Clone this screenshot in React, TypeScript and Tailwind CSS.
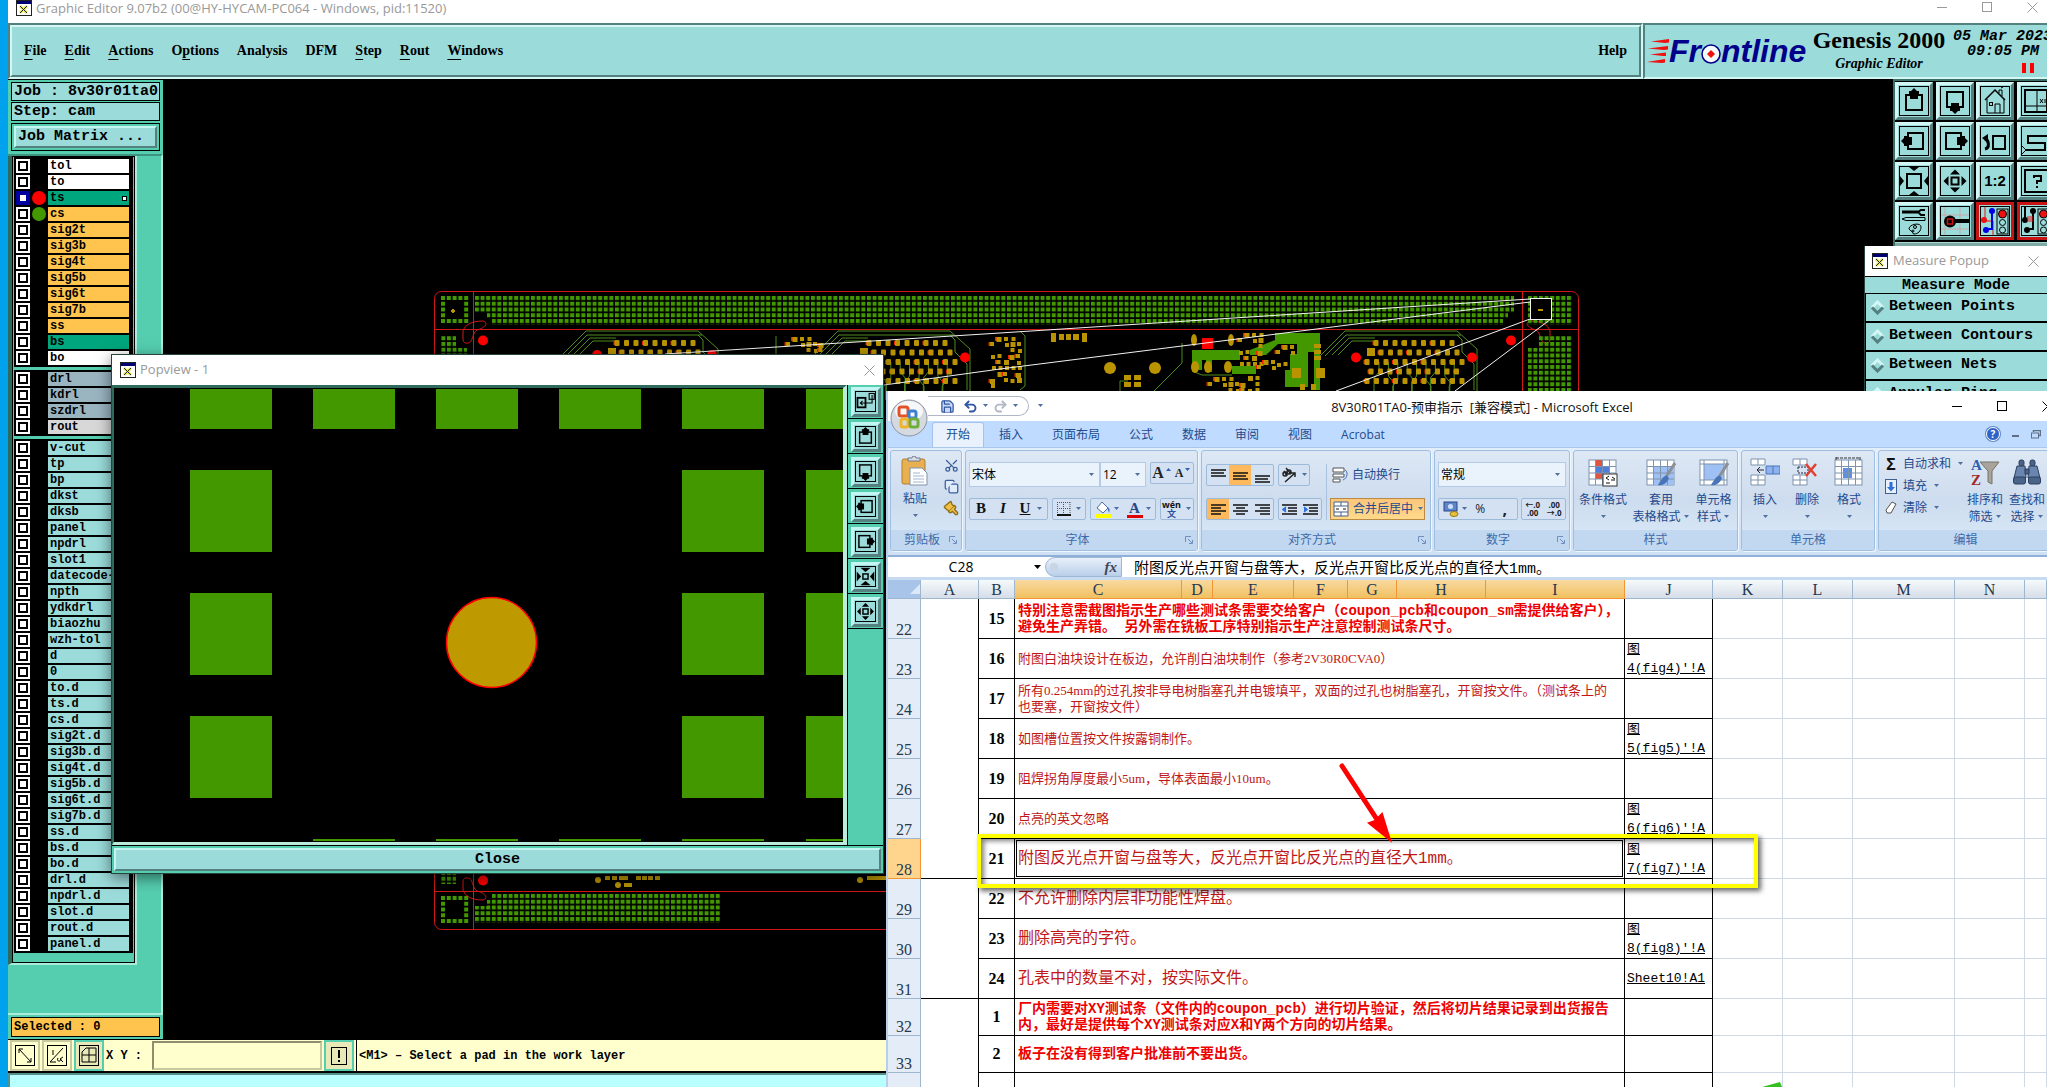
import type { ReactNode } from "react";
import { Copy, Paintbrush, Redo2, Save, Scissors, Undo2 } from "lucide-react";

/* ---------- shared bits ---------- */

function AppIcon() {
  return (
    <svg width="16" height="16" viewBox="0 0 16 16" className="shrink-0">
      <rect x="0.5" y="0.5" width="15" height="15" fill="#fff" stroke="#222" />
      <rect x="1" y="1" width="14" height="3" fill="#000070" />
      <path d="M4 6l7 7M11 6l-7 7" stroke="#e8e860" strokeWidth="3" />
      <path d="M4 6l7 7M11 6l-7 7" stroke="#222" strokeWidth="1" />
    </svg>
  );
}

function MinGlyph() {
  return (
    <svg width="11" height="11" viewBox="0 0 11 11" stroke="currentColor">
      <path d="M0 5.5h10" />
    </svg>
  );
}

function MaxGlyph() {
  return (
    <svg width="11" height="11" viewBox="0 0 11 11" fill="none" stroke="currentColor">
      <rect x="0.5" y="0.5" width="9" height="9" />
    </svg>
  );
}

function CloseGlyph() {
  return (
    <svg width="11" height="11" viewBox="0 0 11 11" stroke="currentColor">
      <path d="M0.5 0.5l10 10M10.5 0.5l-10 10" />
    </svg>
  );
}

function WindowButtons({ className }: { className: string }) {
  return (
    <div className={`flex shrink-0 overflow-hidden ${className}`}>
      <button aria-label="Minimize" className="flex w-[45px] shrink-0 items-center justify-center"><MinGlyph /></button>
      <button aria-label="Maximize" className="flex w-[45px] shrink-0 items-center justify-center"><MaxGlyph /></button>
      <button aria-label="Close window" className="flex w-[45px] shrink-0 items-center justify-center"><CloseGlyph /></button>
    </div>
  );
}

/* ---------- layer list ---------- */

interface Layer {
  name: string;
  color: string;
  dot?: string;
  active?: boolean;
}

const WHITE = "bg-white";
const GREEN = "bg-[#00a67d]";
const ORANGE = "bg-[#fec44d]";
const CYAN = "bg-[#9bdbda]";
const STEEL = "bg-[#9ab4c0]";

const boardLayers: Layer[] = [
  { name: "tol", color: WHITE },
  { name: "to", color: WHITE },
  { name: "ts", color: GREEN, dot: "bg-[#ff0000]", active: true },
  { name: "cs", color: ORANGE, dot: "bg-[#439800]" },
  { name: "sig2t", color: ORANGE },
  { name: "sig3b", color: ORANGE },
  { name: "sig4t", color: ORANGE },
  { name: "sig5b", color: ORANGE },
  { name: "sig6t", color: ORANGE },
  { name: "sig7b", color: ORANGE },
  { name: "ss", color: ORANGE },
  { name: "bs", color: GREEN },
  { name: "bo", color: WHITE },
];

const drillLayers: Layer[] = [
  { name: "drl", color: STEEL },
  { name: "kdrl", color: STEEL },
  { name: "szdrl", color: STEEL },
  { name: "rout", color: "bg-[#d8d8d8]" },
];

const miscLayers: Layer[] = [
  "v-cut", "tp", "bp", "dkst", "dksb", "panel", "npdrl", "slot1", "datecode-", "npth", "ydkdrl",
  "biaozhu", "wzh-tol", "d", "0", "to.d", "ts.d", "cs.d", "sig2t.d", "sig3b.d", "sig4t.d",
  "sig5b.d", "sig6t.d", "sig7b.d", "ss.d", "bs.d", "bo.d", "drl.d", "npdrl.d", "slot.d",
  "rout.d", "panel.d",
].map((name) => ({ name, color: CYAN }));

function LayerRow({ layer }: { layer: Layer }) {
  return (
    <label className="flex h-3.5 shrink-0 items-center gap-0.5">
      <input
        type="checkbox"
        className={`size-3.5 appearance-none border-2 bg-white ${
          layer.active
            ? "border-[#0000a0] shadow-[inset_0_0_0_2px_#0000a0]"
            : "border-white shadow-[inset_0_0_0_2px_#000]"
        }`}
      />
      <span className={`size-3.5 rounded-full ${layer.dot ?? ""}`} />
      <span className={`flex h-3.5 w-[81px] items-center justify-between px-0.5 text-xs leading-3 font-bold ${layer.color}`}>
        {layer.name}
        {layer.active && <span className="size-[5px] border border-black bg-white" />}
      </span>
    </label>
  );
}

function LayerGroup({ layers }: { layers: Layer[] }) {
  return (
    <div className="flex flex-col gap-0.5 bg-black p-0.5">
      {layers.map((layer) => (
        <LayerRow key={layer.name} layer={layer} />
      ))}
    </div>
  );
}

function LeftPanel() {
  return (
    <aside className="flex w-[155px] shrink-0 flex-col border-t border-black bg-[#55ceb0] text-[15px] font-bold">
      <div className="flex flex-col gap-px p-[3px] pt-0.5 leading-[18px]">
        <div className="h-[19px] border border-black bg-[#9bdbda] pl-0.5 whitespace-pre">Job : 8v30r01ta0</div>
        <div className="h-[19px] border border-black bg-[#9bdbda] pl-0.5 whitespace-pre">Step: cam</div>
        <div className="mt-px h-7 border border-black p-0.5">
          <button className="h-[22px] w-full border-2 border-t-[#c3f5f2] border-r-[#548080] border-b-[#548080] border-l-[#c3f5f2] bg-[#9bdbda] pl-0.5 text-left leading-4">
            Job Matrix ...
          </button>
        </div>
      </div>
      <div className="flex min-h-0 flex-1 border-t-2 border-r-2 border-t-[#3c9480] border-r-[#a9ecd9]">
        <div className="w-[129px] self-start border-r-2 border-b-2 border-l-4 border-r-[#a9ecd9] border-b-[#a9ecd9] border-l-[#2f6b5d]">
          <div className="border border-black px-px pb-[9px]">
            <div className="flex flex-col gap-[3px]">
              <LayerGroup layers={boardLayers} />
              <LayerGroup layers={drillLayers} />
              <LayerGroup layers={miscLayers} />
            </div>
          </div>
        </div>
      </div>
      <div className="border-t-2 border-t-[#a9ecd9] px-[3px] pt-0.5 pb-0.5">
        <div className="h-5 border border-black bg-[#fec44d] pl-0.5 text-xs leading-[18px] font-bold">Selected : 0</div>
      </div>
    </aside>
  );
}

/* ---------- header ---------- */

const menus: [string, string, string][] = [
  ["", "F", "ile"],
  ["", "E", "dit"],
  ["", "A", "ctions"],
  ["O", "p", "tions"],
  ["Analysis", "", ""],
  ["DFM", "", ""],
  ["", "S", "tep"],
  ["", "R", "out"],
  ["", "W", "indows"],
];

function Header() {
  return (
    <header className="flex h-14 shrink-0 font-['Liberation_Serif',serif] font-bold">
      <nav className="flex flex-1 items-center justify-between border-2 border-t-[#548080] border-r-[#d2f7f5] border-b-[#d2f7f5] border-l-[#548080] bg-[#9bdbda]">
        <div className="flex h-full w-full items-center justify-between border-2 border-t-[#d2f7f5] border-r-[#548080] border-b-[#548080] border-l-[#d2f7f5] pr-3 pl-3 text-sm">
          <div className="flex gap-[18px]">
            {menus.map(([pre, key, post]) => (
              <button key={pre + key + post}>
                {pre}
                <span className="underline underline-offset-4">{key}</span>
                {post}
              </button>
            ))}
          </div>
          <button>Help</button>
        </div>
      </nav>
      <div className="flex w-[404px] shrink-0 overflow-hidden border-t-2 border-b-2 border-l-2 border-t-[#548080] border-b-[#d2f7f5] border-l-[#548080] bg-[#9bdbda]">
        <div className="flex w-[164px] shrink-0 items-center pl-0.5">
          <svg width="22" height="26" viewBox="0 0 22 26" fill="#f01010" className="shrink-0">
            <path d="M4 3.5L22 1v3.500L18 5zM1 10.500L21 8v3.500L17 12zM3 16.500L19 14.500v3.500L16 18zM0 24L18 21v3.500L15 25z" />
          </svg>
          <div className="flex items-center font-['Liberation_Sans',sans-serif] text-[32px] leading-8 font-bold text-[#00008b] italic">
            Fr
            <svg width="20" height="20" viewBox="0 0 20 20" className="mt-1.5 shrink-0">
              <circle cx="10" cy="10" r="9" fill="#f4fbfb" stroke="#00008b" strokeWidth="1.500" />
              <path d="M10 6l4 4-4 4-4-4z" fill="#f01010" />
            </svg>
            ntline
          </div>
        </div>
        <div className="flex w-[140px] shrink-0 flex-col items-center pt-px">
          <span className="text-2xl leading-7">Genesis 2000</span>
          <span className="mt-0.5 text-sm leading-4 italic">Graphic Editor</span>
        </div>
        <div className="flex shrink-0 flex-col pt-1 pl-1 font-['Liberation_Mono',monospace] text-[15px] leading-[15px] font-bold italic">
          <span className="whitespace-pre">05 Mar 2023</span>
          <span className="pl-3.5">09:05 PM</span>
          <span className="mt-1 ml-[69px] flex gap-1">
            <span className="h-2.5 w-1 bg-[#ff0000]" />
            <span className="h-2.5 w-1 bg-[#ff0000]" />
          </span>
        </div>
      </div>
    </header>
  );
}

/* ---------- tool buttons ---------- */

const boxWithArrow = (
  <>
    <rect x="7" y="9" width="16" height="15" fill="none" stroke="#000" strokeWidth="2" />
    <path d="M15 2l3 3h2v3h-1v5h-8v-5h-1v-3h2z" fill="#000" />
  </>
);

const toolIcons: Record<string, ReactNode> = {
  up: <g>{boxWithArrow}</g>,
  down: <g transform="rotate(180 15 15)">{boxWithArrow}</g>,
  left: <g transform="rotate(-90 15 15)">{boxWithArrow}</g>,
  right: <g transform="rotate(90 15 15)">{boxWithArrow}</g>,
  home: (
    <g fill="none" stroke="#000">
      <path d="M5 14L15 4l10 10" strokeWidth="1.500" />
      <path d="M7 13v14h17V13M19 7V4h3v6M15 27v-9h5v9M21 2l2-1" />
      <rect x="9.500" y="16.500" width="3" height="3" />
    </g>
  ),
  xy: (
    <g fill="none" stroke="#000">
      <rect x="4" y="4" width="22" height="22" strokeWidth="2" />
      <path d="M16 4v22M4 20h22M19 13l3 4M22 13l-3 4M24 13v4" />
    </g>
  ),
  back: (
    <g fill="none" stroke="#000" strokeWidth="2">
      <rect x="13" y="10" width="12" height="13" />
      <path d="M5 23c5-1 4-9 0-10" strokeWidth="3" />
      <path d="M8 8v9l-6-5z" fill="#000" stroke="none" />
    </g>
  ),
  snake: (
    <g fill="none" stroke="#000">
      <path d="M28 10H7v7h17v7H5" strokeWidth="2" />
      <path d="M28 10l3-4M5 24l-4-4M5 24l-4 4" />
    </g>
  ),
  shrink: (
    <g>
      <rect x="8" y="8" width="14" height="14" fill="none" stroke="#000" strokeWidth="2" />
      <path d="M10 1h10l-5 4zM10 29h10l-5-4zM1 10v10l4-5zM29 10v10l-4-5z" />
    </g>
  ),
  converge: (
    <g>
      <rect x="11.500" y="11.500" width="7" height="7" fill="none" stroke="#000" strokeWidth="2" />
      <path d="M8 3h14l-7 6zM8 27h14l-7-6zM3 8v14l6-7zM27 8v14l-6-7z" />
    </g>
  ),
  grow: (
    <g>
      <rect x="11.500" y="11.500" width="7" height="7" fill="none" stroke="#000" strokeWidth="2" />
      <path d="M10 8.500h10l-5-5zM10 21.500h10l-5 5zM8.500 10v10l-5-5zM21.500 10v10l5-5z" />
    </g>
  ),
  help: (
    <g fill="none" stroke="#000" strokeWidth="2">
      <rect x="4" y="4" width="23" height="22" />
      <path d="M13 12v-2h7v5h-4v3M16 20v2" />
    </g>
  ),
  tools: (
    <g fill="none" stroke="#000">
      <path d="M3 6h16" strokeWidth="3" />
      <path d="M26 4h-4l-3 2 3 3h4" strokeWidth="2" />
      <path d="M3 13l4-1.500h19v3H7z" />
      <path d="M10 23c0-5 12-7 12-2 0 4-3 7-7 7-2 0-1-3-3-3z" />
      <circle cx="16" cy="21" r="1.500" />
      <circle cx="14" cy="25" r="1" />
    </g>
  ),
  pad: (
    <g>
      <path d="M5 1v28M20 1v28M1 9h28M1 23h28" stroke="#c9a8a8" />
      <path d="M12 15h17" stroke="#000" strokeWidth="4" />
      <circle cx="10" cy="15.500" r="6" />
      <rect x="7.500" y="13" width="5" height="5" fill="none" stroke="#d01010" strokeWidth="1.500" />
    </g>
  ),
  net: (
    <g>
      <path d="M5 1v14h8v14" stroke="#f01010" fill="none" />
      <path d="M12 5v18H6" stroke="#0000e0" fill="none" strokeWidth="2" />
      <circle cx="12" cy="5" r="3" fill="#0000e0" />
      <circle cx="6" cy="24" r="3" fill="#0000e0" />
      <circle cx="4" cy="14" r="3" fill="#f01010" />
      <rect x="17" y="3" width="11" height="25" fill="none" stroke="#000" />
      <circle cx="22.500" cy="8" r="4" fill="#f01010" stroke="#000" />
      <circle cx="22.500" cy="16.500" r="3" fill="none" stroke="#000" />
      <circle cx="22.500" cy="24" r="3" fill="none" stroke="#000" />
    </g>
  ),
  net2: (
    <g>
      <path d="M4 1v14M12 5v18H6" stroke="#000" fill="none" strokeWidth="2" />
      <circle cx="12" cy="5" r="3" />
      <circle cx="6" cy="24" r="3" />
      <circle cx="4" cy="14" r="3" />
      <path d="M7 10v6M9 10v6M11 10v6" stroke="#f01010" />
      <rect x="17" y="3" width="11" height="25" fill="none" stroke="#000" />
      <circle cx="22.500" cy="8" r="4" fill="#f01010" stroke="#000" />
      <circle cx="22.500" cy="16.500" r="3" fill="none" stroke="#000" />
      <circle cx="22.500" cy="24" r="3" fill="none" stroke="#000" />
    </g>
  ),
  popout: (
    <g fill="none" stroke="#000">
      <rect x="4" y="10" width="11" height="13" strokeWidth="2.500" />
      <rect x="20" y="4" width="7" height="8" strokeWidth="1.500" />
      <path d="M24 6v11H8M11 14l-3 3 3 3" strokeWidth="1.500" />
    </g>
  ),
};

const toolbar = [
  "up", "down", "home", "xy",
  "left", "right", "back", "snake",
  "shrink", "grow", "scale", "help",
  "tools", "pad", "net", "net2",
];

function ToolPalette() {
  return (
    <div className="w-[154px] shrink-0 self-start overflow-hidden border-t-2 border-l-2 border-[#3c6f66] bg-black">
      <div className="grid w-[160px] grid-cols-4 gap-0.5 pt-px">
        {toolbar.map((name) => (
          <button
            key={name}
            aria-label={name}
            className={`flex size-[38px] items-center justify-center border-[3px] bg-[#9bdbda] ${
              name.startsWith("net")
                ? "border-[#c81414]"
                : "border-t-[#d2f7f5] border-r-[#548080] border-b-[#548080] border-l-[#d2f7f5]"
            }`}
          >
            <span className="flex size-[30px] shrink-0 items-center justify-center border border-black">
              {name === "scale" ? (
                <span className="font-['Liberation_Sans',sans-serif] text-[15px] leading-4 font-bold">1:2</span>
              ) : (
                <svg width="28" height="28" viewBox="1 1 28 28">{toolIcons[name]}</svg>
              )}
            </span>
          </button>
        ))}
      </div>
      <div className="mt-0.5 h-1 border-t border-[#a9d9cf] bg-[#7fa9a3]" />
    </div>
  );
}

/* ---------- board drawing ---------- */

const PAD = "#439800";
const GOLD = "#b99400";

function range(from: number, count: number, step: number) {
  return Array.from({ length: count }, (_, i) => from + i * step);
}

// ring of small pads round a corner target
function PadRing({ x, y }: { x: number; y: number }) {
  const cells: [number, number][] = [];
  for (let r = 0; r < 5; r++) {
    for (let c = 0; c < 5; c++) {
      if (r === 0 || r === 4 || c === 0 || c === 4) cells.push([c, r]);
    }
  }
  return (
    <g fill={PAD}>
      {cells.map(([c, r]) => (
        <rect key={`${c}-${r}`} x={x + c * 5.8} y={y + r * 5.75} width="4" height="4" />
      ))}
    </g>
  );
}

function Connector({ x }: { x: number }) {
  const rows: [number, number, number][] = [
    [5, 343, 9],
    [10, 352.5, 9],
    [-4, 362, 11],
    [0, 371.5, 10],
    [-4, 381, 11],
  ];
  return (
    <g>
      <g fill="none" stroke="#4f8c1e">
        {range(0, 9, 1).map((i) => (
          <path key={i} d={`M${x + 8 + i * 9.4} 362v${10 + (i % 3) * 4}l${i % 2 ? 5 : -5} 6v14`} />
        ))}
        <path d={`M${x + 4} 341h-23l-14 14M${x + 4} 338h-26l-17 17M${x + 86} 335l5 5v12l12 12v26`} />
        <path d={`M${x + 90} 335h-115l-21 21M${x + 20} 331h-46l-25 25M${x + 20} 331h66l20 18v45`} />
      </g>
      <rect x={x - 4} y="348" width="8" height="8" fill={GOLD} />
      {rows.map(([dx, y, n]) =>
        range(x + dx, n, 9.5).map((px, i) => (
          <g key={`${px}-${y}`}>
            {i % 3 === 0 && <rect x={px - 3.5} y={y - 2} width="2" height="4" fill="#f02000" />}
            <rect x={px - 2.5} y={y - 3} width="5" height="6" rx="1" fill={GOLD} />
          </g>
        )),
      )}
    </g>
  );
}

function Cluster({ x, y, cols, rows }: { x: number; y: number; cols: number; rows: number }) {
  const cells: [number, number, number][] = [];
  for (let r = 0; r < rows; r++) {
    for (let c = 0; c < cols; c++) {
      const seed = (c * 31 + r * 17 + c * r * 7) % 11;
      if (seed > 3) cells.push([x + c * 6.5 + (seed % 3), y + r * 6 + (seed % 2), seed]);
    }
  }
  return (
    <g>
      {cells.map(([cx, cy, seed]) => (
        <g key={`${cx}-${cy}`}>
          {seed % 3 === 0 && <rect x={cx - 1.5} y={cy} width="2" height="4" fill="#f02000" />}
          <rect x={cx} y={cy} width={seed > 8 ? 5 : 4} height={seed > 8 ? 5 : 4} fill={GOLD} />
        </g>
      ))}
    </g>
  );
}

const BEAN = "M463 340V331C465 325 471 321 483 321C489 323 485 328 477 330C472 333 473 343 468 343Q464 344 463 340Z";

function BoardDrawing() {
  return (
    <svg width="1600" height="960" viewBox="163 79 1600 960" className="absolute top-0 left-0">
      <defs>
        <pattern id="pads" x="475" y="296" width="5.6" height="5.75" patternUnits="userSpaceOnUse">
          <rect width="4" height="4" fill={PAD} />
        </pattern>
      </defs>
      <g fill="none" stroke="#d01818" strokeWidth="1">
        <rect x="434.500" y="291.500" width="1144" height="638" rx="7" />
        <path d="M473.500 291v638M1522.500 291v638M434 329.500h1145M434 891.500h1145" />
        <path d={BEAN} />
        <path d={BEAN} transform="translate(2013 0) scale(-1 1)" />
        <path d={BEAN} transform="translate(0 1221) scale(1 -1)" />
      </g>
      <g fill="url(#pads)">
        <path d="M475 296H1514V313H1508V319H1503V325H492V319H487V313H475Z" />
        <path d="M1528 296H1572V325H1528Z" />
        <path d="M1539 336H1572V400H1528V348H1539Z" />
        <path d="M441 336H456V348H467V400H441Z" />
        <path d="M441 870H456V884H441Z" />
        <path d="M492 894H720V923H475V906H487V900H492Z" />
      </g>
      <rect x="1530" y="298" width="21" height="21" fill="#000" />
      <PadRing x={441} y={296} />
      <PadRing x={441} y={896} />
      <path d="M453 309v4M451 311h4M1538 310h5" stroke={GOLD} strokeWidth="2" />

      <Connector x={612} />
      <Connector x={864} />
      <Connector x={1371} />
      <Cluster x={786} y={336} cols={6} rows={5} />
      <Cluster x={990} y={336} cols={5} rows={9} />

      {/* copper pour in the middle of the board */}
      <path d="M1275 333H1320V390H1314V352H1308V387H1285V370H1290V354H1297V344H1278L1266 355H1250V350L1275 340Z" fill={PAD} />
      <path d="M1192 350H1240V360H1212V372H1206V360H1202V370H1192Z" fill={PAD} />
      <rect x="1232" y="366" width="24" height="8" fill={PAD} />
      <path d="M1182 343v20l-28 28M776 336v20M1020 331l5 5v50l-5 4M1192 371l10 4h30M1120 391v-10h8" stroke="#4f8c1e" fill="none" />
      <rect x="1202" y="338" width="11" height="11" fill="#ff0000" />
      <Cluster x={1238} y={332} cols={4} rows={6} />
      <Cluster x={1257} y={359} cols={3} rows={3} />
      <Cluster x={1208} y={376} cols={8} rows={3} />
      <Cluster x={1276} y={344} cols={3} rows={4} />
      <g fill={GOLD}>
        <rect x="1292" y="368" width="9" height="10" />
        <rect x="1316" y="368" width="9" height="10" />
        <rect x="1300" y="384" width="5" height="6" />
        <rect x="1311" y="384" width="5" height="6" />
        <rect x="1314" y="344" width="7" height="4" />
        <rect x="1314" y="350" width="7" height="4" />
        <rect x="1314" y="356" width="7" height="4" />
        <ellipse cx="1110" cy="368" rx="6" ry="6" />
        <ellipse cx="1155" cy="368" rx="6" ry="6" />
        <ellipse cx="1194" cy="340" rx="3" ry="6" />
        <ellipse cx="1231" cy="340" rx="3" ry="6" />
        <ellipse cx="1195" cy="367" rx="4" ry="6" />
        <ellipse cx="1208" cy="367" rx="4" ry="6" />
        <ellipse cx="1228" cy="367" rx="4" ry="6" />
        <rect x="1051" y="333" width="5" height="9" />
        <rect x="1059" y="334" width="5" height="6" />
        <rect x="1066" y="334" width="5" height="6" />
        <rect x="1073" y="334" width="6" height="6" />
        <rect x="1082" y="333" width="5" height="9" />
        <rect x="1124" y="375" width="7" height="5" />
        <rect x="1134" y="375" width="7" height="5" />
        <rect x="1124" y="382" width="7" height="5" />
        <rect x="1134" y="382" width="7" height="5" />
        <circle cx="598" cy="880" r="3" />
        <circle cx="618" cy="885" r="3" />
        <circle cx="860" cy="880" r="3" />
        <rect x="605" y="876" width="5" height="4" />
        <rect x="612" y="876" width="5" height="4" />
        <rect x="619" y="876" width="9" height="4" />
        <rect x="624" y="883" width="8" height="4" />
        <rect x="636" y="876" width="5" height="4" />
        <rect x="642" y="876" width="5" height="4" />
        <rect x="648" y="876" width="5" height="4" />
        <rect x="655" y="876" width="5" height="4" />
        <rect x="867" y="876" width="19" height="4" />
      </g>
      <g fill="#ff0000">
        <circle cx="483" cy="340.500" r="5" />
        <circle cx="597" cy="355" r="5" />
        <circle cx="712" cy="355" r="5" />
        <circle cx="965" cy="357.500" r="5" />
        <circle cx="1356" cy="357.500" r="5" />
        <circle cx="1472" cy="357.500" r="5" />
        <circle cx="1511" cy="340.500" r="5" />
        <circle cx="483" cy="880.500" r="5" />
      </g>
      <g fill="none" stroke="#f2f2f2">
        <rect x="1530.500" y="298.500" width="21" height="21" />
        <path d="M1530 299L1000 333L665 354M1530 302L1000 369L884 385M1530 319L1336 391M1551 319L1455 391" />
      </g>
    </svg>
  );
}

/* ---------- status bar ---------- */

const statusBtn = "flex h-[31px] w-[30px] shrink-0 items-center justify-center border-2";

function StatusBar() {
  return (
    <footer className="flex h-[34px] shrink-0 items-center gap-0.5 border-t border-b-2 border-black bg-[#ffffce] pl-0.5 text-xs font-bold">
      <button aria-label="Diagonal" className={`${statusBtn} border-[#c9c9a0]`}>
        <svg width="20" height="21" viewBox="0 0 20 21" fill="none" stroke="#000">
          <rect x="0.500" y="0.500" width="19" height="20" />
          <path d="M4 4l12 13M4 8V4h4M16 13v4h-4" />
        </svg>
      </button>
      <button aria-label="Angle" className={`${statusBtn} border-[#c9c9a0]`}>
        <svg width="20" height="21" viewBox="0 0 20 21" fill="none" stroke="#000">
          <rect x="0.500" y="0.500" width="19" height="20" />
          <path d="M3 17L16 3M3 17h6" />
          <path d="M6 5v5M16 12l-3 2 3 3M11 13c-2 4 3 4 3 1" />
        </svg>
      </button>
      <button aria-label="Grid" className={`${statusBtn} border-[#55ceb0] bg-[#e8e8b8]`}>
        <svg width="20" height="21" viewBox="0 0 20 21" fill="none" stroke="#000">
          <rect x="0.500" y="0.500" width="19" height="20" />
          <path d="M3 17V7l4-4h10v14zM3 10h14M10 3v14" />
        </svg>
      </button>
      <label htmlFor="xy" className="w-[44px] whitespace-pre">X Y :</label>
      <input
        id="xy"
        className="h-[29px] w-[170px] border-2 border-t-[#8f8f70] border-r-[#c9c9a0] border-b-[#c9c9a0] border-l-[#8f8f70] bg-[#ffffce] px-1"
      />
      <button aria-label="Alert" className={`${statusBtn} border-[#55ceb0] bg-[#e8e8b8]`}>
        <svg width="16" height="18" viewBox="0 0 16 18" fill="none" stroke="#000">
          <rect x="0.500" y="0.500" width="15" height="17" />
          <path d="M8 3v8M8 13v2" strokeWidth="2" />
        </svg>
      </button>
      <p className="flex h-full flex-1 items-center border-l border-black pl-0.5">
        &lt;M1&gt; – Select a pad in the work layer
      </p>
    </footer>
  );
}

/* ---------- popview window ---------- */

const popTools = ["popout", "up", "down", "left", "right", "converge", "grow"];

function PopviewCanvas() {
  const xs = [190, 313, 436, 559, 682, 806];
  const sides = [190, 682, 806];
  return (
    <svg width="729" height="454" viewBox="114 388 729 454" className="block bg-black">
      <g fill={PAD}>
        {xs.map((x) => <rect key={x} x={x} y="389" width="82" height="40" />)}
        {[470, 593, 716].map((y) => sides.map((x) => <rect key={`${x}-${y}`} x={x} y={y} width="82" height="82" />))}
        {xs.slice(1).map((x) => <rect key={x} x={x} y="839" width="82" height="2" />)}
      </g>
      <circle cx="491.500" cy="642.500" r="45" fill="#be9a00" stroke="#ff0000" strokeWidth="1.500" />
    </svg>
  );
}

function PopviewWindow() {
  return (
    <section className="absolute top-[354px] left-[111px] w-[773px] border border-[#26443d] bg-[#55ceb0] shadow-[0_4px_14px_rgba(0,0,0,0.5)]">
      <div className="flex h-[30px] items-center bg-white pl-2 text-[#999]">
        <AppIcon />
        <h2 className="flex-1 pl-1 font-['Open_Sans',sans-serif] text-[13px]">Popview - 1</h2>
        <button aria-label="Close popview" className="mr-2"><CloseGlyph /></button>
      </div>
      <div className="flex">
        <div className="border-t-[3px] border-r-4 border-b-[3px] border-l-2 border-t-[#2f6b5d] border-r-[#b9ecdc] border-b-[#b9ecdc] border-l-[#2f6b5d]">
          <PopviewCanvas />
        </div>
        <div className="flex flex-1 flex-col gap-px border-l border-black">
          {popTools.map((name) => (
            <button
              key={name}
              aria-label={`popview ${name}`}
              className="flex h-[34px] items-center justify-center border-b border-black p-0.5"
            >
              <span className="flex size-[30px] items-center justify-center border-[3px] border-t-[#c3f5f2] border-r-[#548080] border-b-[#548080] border-l-[#c3f5f2] bg-[#9bdbda]">
                <span className="border border-black">
                  <svg width="19" height="19" viewBox="2 2 26 26">{toolIcons[name]}</svg>
                </span>
              </span>
            </button>
          ))}
        </div>
      </div>
      <div className="border-t border-black p-0.5">
        <button className="block h-[23px] w-full border-2 border-t-[#c3f5f2] border-r-[#548080] border-b-[#548080] border-l-[#c3f5f2] bg-[#9bdbda] text-[15px] leading-[18px] font-bold">
          Close
        </button>
      </div>
    </section>
  );
}

/* ---------- measure popup ---------- */

const measureModes = ["Between Points", "Between Contours", "Between Nets", "Annular Ring"];

function MeasurePopup() {
  return (
    <section className="absolute top-[246px] right-0 w-[183px] border-l border-[#26443d] bg-black text-[15px] font-bold">
      <div className="flex h-[30px] items-center bg-white pl-[7px] text-[#999]">
        <AppIcon />
        <h2 className="flex-1 pl-[5px] font-['Open_Sans',sans-serif] text-[13px] font-normal">Measure Popup</h2>
        <button aria-label="Close measure" className="mr-2"><CloseGlyph /></button>
      </div>
      <div className="mt-px h-4 bg-[#9bdbda] text-center leading-[18px]">Measure Mode</div>
      <div className="flex flex-col gap-0.5 pt-px pl-px">
        {measureModes.map((mode) => (
          <button key={mode} className="flex h-[27px] items-center gap-1 bg-[#9bdbda] pl-1 whitespace-nowrap">
            <svg width="15" height="15" viewBox="0 0 15 15" fill="none" strokeWidth="3" className="shrink-0">
              <path d="M2 7.500L7.500 2L13 7.500" stroke="#d2f7f5" />
              <path d="M2 7.500L7.500 13L13 7.500" stroke="#548080" />
            </svg>
            {mode}
          </button>
        ))}
      </div>
    </section>
  );
}

/* ---------- spreadsheet window ---------- */

const tabs = ["开始", "插入", "页面布局", "公式", "数据", "审阅", "视图", "Acrobat"];

function Caret() {
  return (
    <svg width="7" height="4" viewBox="0 0 7 4" className="shrink-0" fill="#4f6f9f">
      <path d="M1 0h5L3.500 3z" />
    </svg>
  );
}

function Group({ label, className, launcher, children }: { label: string; className: string; launcher?: boolean; children: ReactNode }) {
  return (
    <div className={`flex h-[101px] shrink-0 flex-col overflow-hidden rounded-[3px] border border-[#9ebfdf] bg-linear-to-b from-[#dee8f5] via-[#cddcee] to-[#dcebfa] shadow-[1px_1px_0_#eef6ff] ${className}`}>
      <div className="flex-1">{children}</div>
      <div className="flex h-5 items-center bg-[#c1d8f0] px-1 text-[#3e6aaa]">
        <span className="flex-1 text-center">{label}</span>
        {launcher && (
          <svg width="8" height="8" viewBox="0 0 8 8" fill="none" stroke="#6f8fbf">
            <path d="M0.500 6V0.500H6M3 3l4 4M7.500 4v3.500H4" />
          </svg>
        )}
      </div>
    </div>
  );
}

const segBox = "flex h-[22px] items-center rounded-[2px] border border-[#9dbad9] bg-[#d3e1f2]";
const segItem = "flex h-5 flex-1 items-center justify-center gap-0.5";
const hot = "bg-[#fdb95c]";

function Combo({ label, value, className }: { label: string; value: string; className: string }) {
  return (
    <div className={`flex h-[25px] items-center border border-[#b3cbe6] bg-[#eaf2fb] pr-1 ${className}`}>
      <select aria-label={label} className="min-w-0 flex-1 appearance-none bg-transparent pl-0.5 text-black">
        <option>{value}</option>
      </select>
      <Caret />
    </div>
  );
}

function Lines({ widths, indent, top = 3, arrow }: { widths: number[]; indent?: "center" | "right"; top?: number; arrow?: "left" | "right" }) {
  return (
    <svg width="15" height="15" viewBox="0 0 15 15" stroke="#111" strokeWidth="1.500">
      {widths.map((w, i) => {
        const x = indent === "center" ? (15 - w) / 2 : indent === "right" ? 15 - w : 0;
        return <path key={i} d={`M${x} ${top + i * 3}h${w}`} />;
      })}
      {arrow === "left" && <path d="M4 5L1 7.500L4 10" fill="#2f6fd8" stroke="#2f6fd8" />}
      {arrow === "right" && <path d="M1 5L4 7.500L1 10" fill="#2f6fd8" stroke="#2f6fd8" />}
    </svg>
  );
}

function GridIcon({ kind }: { kind: "cond" | "table" | "cell" | "insert" | "delete" | "format" }) {
  return (
    <svg width="30" height="30" viewBox="0 0 30 30" fill="none" stroke="#7f93ad">
      {kind === "insert" || kind === "delete" ? (
        <>
          <path d="M1 2h14v6H1zM8 2v6M1 18h14v10H1zM8 18v10M1 23h14" fill="#fff" />
          {kind === "insert" ? (
            <>
              <path d="M16 9h14v8H16zM23 9v8" fill="#8fb2ee" stroke="#4a73bd" />
              <path d="M14 13H7M10 10l-3 3 3 3" stroke="#223" />
            </>
          ) : (
            <>
              <path d="M6 10h10v6H6z" strokeDasharray="2 1" stroke="#223" />
              <path d="M14 7l10 12M24 7L14 19" stroke="#e0402f" strokeWidth="2.500" />
            </>
          )}
        </>
      ) : (
        <>
          <rect x="1" y="3" width="27" height="25" fill="#fff" />
          {kind === "cond" && (
            <>
              <path d="M7 3h7v6H7zM7 16h7v6H7z" fill="#e0553f" stroke="none" />
              <path d="M7 9h14v7H7z" fill="#4f7fdc" stroke="none" />
            </>
          )}
          {kind === "table" && <path d="M8 9h20v19H8z" fill="#9fc0f5" stroke="none" />}
          {kind === "cell" && <path d="M5 7h20v16H5z" fill="#9fc0f5" stroke="none" />}
          {kind === "format" && <path d="M9 11h9v10H9z" fill="#5d8fe5" stroke="none" />}
          {kind !== "cell" && <path d="M1 9.500h27M1 16h27M1 22h27M7.500 3v25M14.500 3v25M21.500 3v25" />}
          {kind === "cell" && <path d="M1 7h27M1 23h27M5 3v25M25 3v25" />}
          {kind === "cond" && (
            <>
              <rect x="15" y="17" width="14" height="12" fill="#fff" stroke="#333" />
              <path d="M21 19l-3 2 3 2M23 23h4M18 26h4M24 20l3 2" stroke="#111" />
            </>
          )}
          {kind === "format" && <path d="M2 1h24M2 0v3M26 0v3" stroke="#333" strokeDasharray="3 1" />}
          {(kind === "table" || kind === "cell") && (
            <>
              <path d="M29 6l-9 14" stroke="#8b8f96" strokeWidth="3" />
              <path d="M21 19c-3-1-5 3-9 9 5 1 9-2 11-7z" fill="#4a74b8" stroke="none" />
            </>
          )}
        </>
      )}
    </svg>
  );
}

function BigButton({ icon, lines, className }: { icon: ReactNode; lines: string[]; className: string }) {
  return (
    <button className={`flex shrink-0 flex-col items-center pt-1.5 leading-[17px] whitespace-nowrap ${className}`}>
      <span className="mb-1 flex h-[30px] items-center">{icon}</span>
      <span>{lines[0]}</span>
      <span className="flex h-[17px] items-center gap-0.5">
        {lines[1]}
        <Caret />
      </span>
    </button>
  );
}

function Ribbon() {
  return (
    <div className="flex h-[108px] shrink-0 gap-[3px] overflow-hidden border-t border-[#a9c7ea] bg-linear-to-b from-[#e3eefb] to-[#cfe0f4] pt-0.5 pl-0.5 text-xs text-[#1f4a8c]">
      <Group label="剪贴板" className="w-[72px]" launcher>
        <div className="flex gap-3 pt-[5px] pl-2">
          <BigButton
            className="-mt-1.5 w-8"
            lines={["粘贴", ""]}
            icon={
              <svg width="28" height="30" viewBox="0 0 28 30">
                <rect x="1" y="3" width="23" height="25" rx="2" fill="#e8b050" stroke="#b08030" />
                <path d="M7 5V2h4a2 2 0 0 1 4 0h4v3z" fill="#d8dce4" stroke="#70788a" />
                <path d="M9 12h12l5 5v12H9z" fill="#fff" stroke="#7f93ad" />
                <path d="M12 17h7M12 20h11M12 23h11M12 26h11" stroke="#9fb4d4" />
              </svg>
            }
          />
          <div className="flex flex-col items-center gap-1.5 pt-0.5 text-[#3b5f9b]">
            <button aria-label="Cut"><Scissors size={15} className="-rotate-90" /></button>
            <button aria-label="Copy"><Copy size={15} fill="#dfeafa" /></button>
            <button aria-label="Format painter"><Paintbrush size={16} className="rotate-90 text-[#8a6d20]" fill="#f0c040" /></button>
          </div>
        </div>
      </Group>

      <Group label="字体" className="w-[233px]" launcher>
        <div className="flex flex-col gap-[11px] px-[3px] pt-[11px]">
          <div className="flex">
            <Combo label="Font" value="宋体" className="w-[131px]" />
            <Combo label="Size" value="12" className="w-[46px]" />
            <div className={`ml-1 w-[44px] font-['Liberation_Serif',serif] font-bold text-[#222] ${segBox}`}>
              <button aria-label="Grow font" className={`${segItem} text-base`}>
                A
                <svg width="5" height="3" viewBox="0 0 5 3" className="mb-2" fill="#2f5fb0"><path d="M0 3h5L2.500 0z" /></svg>
              </button>
              <button aria-label="Shrink font" className={`${segItem} text-xs`}>
                A
                <svg width="5" height="3" viewBox="0 0 5 3" className="mb-2" fill="#2f5fb0"><path d="M0 0h5L2.500 3z" /></svg>
              </button>
            </div>
          </div>
          <div className="flex gap-1">
            <div className={`w-[79px] font-['Liberation_Serif',serif] text-[15px] text-[#111] ${segBox}`}>
              <button className={`${segItem} font-bold`}>B</button>
              <button className={`${segItem} font-bold italic`}>I</button>
              <button className={`${segItem} font-bold underline`}>U</button>
              <span className="pr-1"><Caret /></span>
            </div>
            <button aria-label="Borders" className={`w-[34px] justify-center gap-1 ${segBox}`}>
              <svg width="14" height="14" viewBox="0 0 14 14" fill="none" stroke="#555">
                <path d="M0.500 0v13M6.500 0v13M13 0v13M0 0.500h13M0 6.500h13" strokeDasharray="1 1" />
                <path d="M0 13h14" stroke="#111" strokeWidth="2" />
              </svg>
              <Caret />
            </button>
            <div className={`w-[66px] ${segBox}`}>
              <button className={segItem} aria-label="Fill color">
                <svg width="16" height="17" viewBox="0 0 16 17">
                  <path d="M7 1l6 6-5 5-6-5z" fill="#fff" stroke="#4f6f9f" />
                  <path d="M12 6c3 1 3 3 2 6z" fill="#3c6fc0" />
                  <rect y="13" width="16" height="4" fill="#ffff00" />
                </svg>
                <Caret />
              </button>
              <button className={segItem} aria-label="Font color">
                <span className="flex flex-col items-center font-['Liberation_Serif',serif] text-[15px] leading-[14px] font-bold text-[#27478a]">
                  A
                  <span className="h-[3px] w-4 bg-[#e00000]" />
                </span>
                <Caret />
              </button>
            </div>
            <button className={`w-[34px] justify-center gap-1 ${segBox}`}>
              <span className="flex flex-col items-center text-[9px] leading-[9px] font-bold text-[#2f4f9f]">
                <span className="text-[#111]">wén</span>
                <span>文</span>
              </span>
              <Caret />
            </button>
          </div>
        </div>
      </Group>

      <Group label="对齐方式" className="w-[230px]" launcher>
        <div className="flex gap-1 pt-[13px] pl-1">
          <div className="flex flex-col gap-3">
            <div className="flex gap-1">
              <div className={`w-[68px] ${segBox}`}>
                <button aria-label="Top align" className={segItem}><Lines widths={[15, 13, 15]} top={2} /></button>
                <button aria-label="Middle align" className={`${segItem} ${hot}`}><Lines widths={[15, 13, 15]} top={5} /></button>
                <button aria-label="Bottom align" className={segItem}><Lines widths={[15, 13, 15]} top={8} /></button>
              </div>
              <button aria-label="Orientation" className={`w-8 justify-center gap-1 text-[#111] ${segBox}`}>
                <svg width="16" height="16" viewBox="0 0 16 16" fill="none" stroke="#222" strokeWidth="1.500">
                  <circle cx="4" cy="7" r="2" />
                  <circle cx="8" cy="5" r="2" />
                  <path d="M6 9L3 4M10 7L5 1M4 15L14 6M14 10V6h-4" />
                </svg>
                <Caret />
              </button>
            </div>
            <div className="flex gap-1">
              <div className={`w-[68px] ${segBox}`}>
                <button aria-label="Align left" className={`${segItem} ${hot}`}><Lines widths={[15, 10, 15, 10]} /></button>
                <button aria-label="Align center" className={segItem}><Lines widths={[15, 9, 15, 9]} indent="center" /></button>
                <button aria-label="Align right" className={segItem}><Lines widths={[15, 10, 15, 10]} indent="right" /></button>
              </div>
              <div className={`w-[44px] ${segBox}`}>
                <button aria-label="Outdent" className={segItem}><Lines widths={[15, 9, 9, 15]} indent="right" arrow="left" /></button>
                <button aria-label="Indent" className={segItem}><Lines widths={[15, 9, 9, 15]} indent="right" arrow="right" /></button>
              </div>
            </div>
          </div>
          <div className="flex flex-col gap-3 border-l border-[#a9c2df] pl-[3px]">
            <button className="flex h-[22px] items-center gap-1 pl-0.5">
              <svg width="16" height="17" viewBox="0 0 16 17" fill="#fff" stroke="#555">
                <path d="M1 1h11v4H1zM1 7h11v3H1zM1 12h7v3H1z" />
                <path d="M13 3c3 1 3 8-2 10" fill="none" stroke="#3c6fc0" />
              </svg>
              自动换行
            </button>
            <button className="flex h-[22px] w-[95px] items-center gap-1 border border-[#b98b45] bg-linear-to-b from-[#fbc67b] to-[#ffd98a] pl-0.5">
              <svg width="16" height="16" viewBox="0 0 16 16" fill="#fff" stroke="#44608a">
                <path d="M1 1h14v14H1zM1 5h14M1 11h14M8 1v4M8 11v4" />
                <path d="M3 8h3M10 8h3" stroke="#111" />
              </svg>
              <span className="whitespace-nowrap">合并后居中</span>
              <Caret />
            </button>
          </div>
        </div>
      </Group>

      <Group label="数字" className="w-[136px]" launcher>
        <div className="flex flex-col gap-[11px] px-[3px] pt-[11px]">
          <Combo label="Number format" value="常规" className="w-full" />
          <div className="flex gap-[3px]">
            <div className={`w-[80px] text-[#222] ${segBox}`}>
              <button aria-label="Currency" className={`${segItem} pl-1`}>
                <svg width="16" height="16" viewBox="0 0 16 16">
                  <rect x="1" y="1" width="13" height="9" fill="#5f86c8" stroke="#27478a" />
                  <circle cx="7.500" cy="5.500" r="2.500" fill="#cfe0ff" />
                  <ellipse cx="11" cy="13" rx="4" ry="2.500" fill="#e8c040" stroke="#9a7a10" />
                </svg>
                <Caret />
              </button>
              <button className={segItem}>%</button>
              <button className={`${segItem} text-base font-bold`}>,</button>
            </div>
            <div className={`flex-1 text-[8px] leading-[8px] font-bold text-[#222] ${segBox}`}>
              <button className={segItem}>←.0<br />.00</button>
              <button className={segItem}>.00<br />→.0</button>
            </div>
          </div>
        </div>
      </Group>

      <Group label="样式" className="w-[165px]">
        <div className="flex">
          <BigButton className="w-[58px]" icon={<GridIcon kind="cond" />} lines={["条件格式", ""]} />
          <BigButton className="w-[58px]" icon={<GridIcon kind="table" />} lines={["套用", "表格格式"]} />
          <BigButton className="w-[47px]" icon={<GridIcon kind="cell" />} lines={["单元格", "样式"]} />
        </div>
      </Group>

      <Group label="单元格" className="w-[134px]">
        <div className="flex pl-0.5">
          <BigButton className="w-[42px]" icon={<GridIcon kind="insert" />} lines={["插入", ""]} />
          <BigButton className="w-[42px]" icon={<GridIcon kind="delete" />} lines={["删除", ""]} />
          <BigButton className="w-[42px]" icon={<GridIcon kind="format" />} lines={["格式", ""]} />
        </div>
      </Group>

      <Group label="编辑" className="w-[175px]">
        <div className="flex">
          <div className="flex w-[85px] shrink-0 flex-col gap-1 pt-1 pl-1.5">
            <button className="flex h-[18px] items-center gap-1.5 whitespace-nowrap">
              <span className="w-3 text-base leading-4 font-bold text-[#111]">Σ</span>自动求和<Caret />
            </button>
            <button className="flex h-[18px] items-center gap-1.5">
              <svg width="12" height="15" viewBox="0 0 12 15">
                <rect x="0.500" y="0.500" width="11" height="14" fill="#e8f0fc" stroke="#3f5f8f" />
                <path d="M4.500 3h3v5h2.500L6 12.500 2 8h2.500z" fill="#2f6fd8" />
              </svg>
              填充<Caret />
            </button>
            <button className="flex h-[18px] items-center gap-1.5">
              <svg width="12" height="14" viewBox="0 0 12 14">
                <path d="M1 9L7 1l4 2-5 9H2z" fill="#fff" stroke="#555" />
              </svg>
              清除<Caret />
            </button>
          </div>
          <BigButton
            className="w-[42px]"
            lines={["排序和", "筛选"]}
            icon={
              <svg width="30" height="30" viewBox="0 0 30 30">
                <text x="1" y="13" fontSize="15" fontWeight="bold" fontFamily="Liberation Serif" fill="#2f5fb0">A</text>
                <text x="1" y="28" fontSize="15" fontWeight="bold" fontFamily="Liberation Serif" fill="#a02828">Z</text>
                <path d="M10 5h19l-7 9v13l-4-2V14z" fill="#a8a49c" stroke="#77736b" />
              </svg>
            }
          />
          <BigButton
            className="w-[42px]"
            lines={["查找和", "选择"]}
            icon={
              <svg width="28" height="28" viewBox="0 0 28 28" fill="#4a6488" stroke="#2b3f5f">
                <rect x="6" y="2" width="5" height="6" rx="2" />
                <rect x="17" y="2" width="5" height="6" rx="2" />
                <path d="M4 8h8l1 12H1zM16 8h8l3 12H15z" fill="#6a86ae" />
                <rect x="0.500" y="19" width="12" height="7" rx="2" />
                <rect x="15.500" y="19" width="12" height="7" rx="2" />
                <path d="M12 11h4v5h-4z" />
              </svg>
            }
          />
        </div>
      </Group>
    </div>
  );
}

const columns: { name: string; width: string; selected?: boolean }[] = [
  { name: "A", width: "w-[58px]" },
  { name: "B", width: "w-[36px]" },
  { name: "C", width: "w-[167px]", selected: true },
  { name: "D", width: "w-[31px]", selected: true },
  { name: "E", width: "w-[81px]", selected: true },
  { name: "F", width: "w-[54px]", selected: true },
  { name: "G", width: "w-[49px]", selected: true },
  { name: "H", width: "w-[89px]", selected: true },
  { name: "I", width: "w-[139px]", selected: true },
  { name: "J", width: "w-[88px]" },
  { name: "K", width: "w-[70px]" },
  { name: "L", width: "w-[70px]" },
  { name: "M", width: "w-[102px]" },
  { name: "N", width: "w-[70px]" },
  { name: "", width: "" },
];

type CellStyle = "bold" | "small" | "large";

interface SheetRow {
  row?: number;
  no: string;
  lines: string[];
  style: CellStyle;
  link?: string[];
  sectionEnd?: boolean;
}

const cellStyles: Record<CellStyle, string> = {
  bold: "font-['Liberation_Mono','Noto_Sans_CJK_SC',monospace] text-sm leading-4 font-bold text-[#ee0000]",
  small: "font-['Liberation_Serif','Noto_Sans_CJK_SC',serif] text-[13px] leading-4 text-[#c01818]",
  large: "font-['Liberation_Mono','Noto_Sans_CJK_SC',monospace] text-base leading-5 text-[#c01818]",
};

const sheet: SheetRow[] = [
  { row: 22, no: "15", style: "bold", lines: ["特别注意需截图指示生产哪些测试条需要交给客户（coupon_pcb和coupon_sm需提供给客户），", "避免生产弄错。 另外需在铣板工序特别指示生产注意控制测试条尺寸。"] },
  { row: 23, no: "16", style: "small", lines: ["附图白油块设计在板边，允许削白油块制作（参考2V30R0CVA0）"], link: ["图", "4(fig4)'!A"] },
  { row: 24, no: "17", style: "small", lines: ["所有0.254mm的过孔按非导电树脂塞孔并电镀填平，双面的过孔也树脂塞孔，开窗按文件。（测试条上的", "也要塞，开窗按文件）"] },
  { row: 25, no: "18", style: "small", lines: ["如图槽位置按文件按露铜制作。"], link: ["图", "5(fig5)'!A"] },
  { row: 26, no: "19", style: "small", lines: ["阻焊拐角厚度最小5um，导体表面最小10um。"] },
  { row: 27, no: "20", style: "small", lines: ["点亮的英文忽略"], link: ["图", "6(fig6)'!A"] },
  { row: 28, no: "21", style: "large", lines: ["附图反光点开窗与盘等大，反光点开窗比反光点的直径大1mm。"], link: ["图", "7(fig7)'!A"], sectionEnd: true },
  { row: 29, no: "22", style: "large", lines: ["不允许删除内层非功能性焊盘。"] },
  { row: 30, no: "23", style: "large", lines: ["删除高亮的字符。"], link: ["图", "8(fig8)'!A"] },
  { row: 31, no: "24", style: "large", lines: ["孔表中的数量不对，按实际文件。"], link: ["Sheet10!A1"], sectionEnd: true },
  { row: 32, no: "1", style: "bold", lines: ["厂内需要对XY测试条（文件内的coupon_pcb）进行切片验证，然后将切片结果记录到出货报告", "内，最好是提供每个XY测试条对应X和Y两个方向的切片结果。"] },
  { row: 33, no: "2", style: "bold", lines: ["板子在没有得到客户批准前不要出货。"] },
  { no: "", style: "bold", lines: [] },
];

function Sheet() {
  return (
    <table className="w-full table-fixed border-separate border-spacing-0 bg-white font-['Liberation_Serif','Noto_Sans_CJK_SC',serif] text-base text-[#24384f]">
      <thead>
        <tr className="h-[19px]">
          <th className="w-[33px] border-r border-b border-[#9eb6ce] bg-[#a9c4e9] p-0">
            <svg width="10" height="10" viewBox="0 0 10 10" className="ml-auto block" fill="#dbe8f8"><path d="M10 0v10H0z" /></svg>
          </th>
          {columns.map((col) => (
            <th
              key={col.name}
              className={`border-r border-b p-0 leading-[17px] font-normal ${col.width} ${
                col.selected
                  ? "border-[#f29536] bg-linear-to-b from-[#f9d99f] to-[#f1c15f]"
                  : "border-[#9eb6ce] bg-linear-to-b from-[#f6fafb] to-[#d5dde8]"
              }`}
            >
              {col.name}
            </th>
          ))}
        </tr>
      </thead>
      <tbody>
        {sheet.map((r) => (
          <tr key={r.no} className={!r.row || r.row >= 32 ? "h-[37px]" : "h-10"}>
            <th
              className={`border-r border-b p-0 align-bottom leading-4 font-normal ${
                r.row === 28 ? "border-[#f29536] bg-[#ffd58d]" : "border-[#9eb6ce] bg-[#e4ecf7]"
              }`}
            >
              {r.row}
            </th>
            <td className={`border-r border-r-black p-0 ${r.sectionEnd ? "border-b border-b-black" : ""}`} />
            <td className="border-r border-b border-black p-0 text-center font-bold text-black">{r.no}</td>
            <td
              colSpan={7}
              className={`border-r border-b border-black py-0 pr-0 pl-[3px] whitespace-nowrap ${cellStyles[r.style]} ${
                r.row === 28 ? "shadow-[inset_0_0_0_1px_#fff,inset_0_0_0_2px_#000]" : ""
              }`}
            >
              {r.lines.map((line) => (
                <div key={line}>{line}</div>
              ))}
            </td>
            <td className="border-r border-b border-black py-0 pr-0 pl-0.5 font-['Liberation_Mono','Noto_Sans_CJK_SC',monospace] text-[13px] leading-5 text-black">
              {r.link && (
                <a href="#sheet" className="block underline">
                  {r.link.map((part) => (
                    <span key={part} className="block h-[19px]">{part}</span>
                  ))}
                </a>
              )}
            </td>
            {["K", "L", "M", "N", "O"].map((c) => (
              <td key={c} className="border-r border-b border-[#d0d7e5] p-0" />
            ))}
          </tr>
        ))}
      </tbody>
    </table>
  );
}

function ExcelWindow() {
  return (
    <section className="absolute top-[391px] right-0 bottom-0 left-[886px] flex flex-col overflow-hidden border-l-2 border-[#b8cfe9] bg-white font-['Open_Sans','Noto_Sans_CJK_SC',sans-serif]">
      <div className="flex h-[30px] shrink-0 bg-white">
        <div className="flex w-[157px] shrink-0 items-center pl-10">
          <div className="flex h-5 w-[101px] items-center gap-1 rounded-r-full border border-l-0 border-[#b0b8c8] pl-3 text-[#2f55a4]">
            <button aria-label="Save"><Save size={15} fill="#c9d8f4" /></button>
            <button aria-label="Undo" className="flex items-center gap-1 pl-1"><Undo2 size={15} strokeWidth={3} /><Caret /></button>
            <button aria-label="Redo" className="flex items-center gap-1 text-[#b0b8c4]"><Redo2 size={15} strokeWidth={3} /><Caret /></button>
          </div>
          <span className="pl-2"><Caret /></span>
        </div>
        <h1 className="flex-1 pr-4 text-center text-[13px] leading-8 whitespace-pre text-[#111]">8V30R01TA0-预审指示  [兼容模式] - Microsoft Excel</h1>
        <WindowButtons className="w-28" />
      </div>
      <div className="flex h-[26px] shrink-0 items-end justify-between bg-[#bfdbff] pl-11 text-xs text-[#1f4a8c]">
        <div className="flex gap-px">
          {tabs.map((tab, i) => (
            <button
              key={tab}
              className={`h-[25px] rounded-t-[3px] border border-b-0 px-[13px] whitespace-nowrap ${
                i === 0 ? "border-[#a5c3ea] bg-[#e9f2fc]" : "border-transparent"
              }`}
            >
              {tab}
            </button>
          ))}
        </div>
        <div className="flex h-full items-center gap-3 pr-1.5">
          <button className="size-3.5 rounded-full border border-white bg-[#2f62c8] text-[10px] leading-3 font-bold text-white ring-1 ring-[#5f86c8]">?</button>
          <span className="mt-1 h-0.5 w-[7px] bg-[#5f6f85]" />
          <svg width="10" height="9" viewBox="0 0 10 9" fill="none" stroke="#5f6f85">
            <path d="M2.500 2V0.500h7v5H8" strokeWidth="1.500" />
            <rect x="0.500" y="3" width="7" height="5" />
          </svg>
        </div>
      </div>
      <svg width="38" height="38" viewBox="0 0 38 38" className="absolute top-2 left-0.5">
        <circle cx="19" cy="19" r="18" fill="#d5d9e0" stroke="#8d949f" />
        <ellipse cx="19" cy="12" rx="14" ry="10" fill="#f6f7f9" />
        <g fill="none" strokeWidth="3">
          <rect x="9" y="8" width="9" height="9" rx="2" stroke="#e0532a" />
          <rect x="19" y="12" width="7" height="7" rx="2" stroke="#3c7fd0" />
          <rect x="11" y="20" width="7" height="8" rx="2" stroke="#f0b428" />
          <rect x="20" y="20" width="8" height="8" rx="2" stroke="#6fae3a" />
        </g>
      </svg>
      <Ribbon />
      <div className="flex h-[25px] shrink-0 items-center border-t-2 border-b-[3px] border-t-[#8fb0d8] border-b-[#c6daf2] bg-white text-[15px] text-black">
        <div className="flex w-[157px] shrink-0 items-center pr-1">
          <input aria-label="Name box" defaultValue="C28" className="min-w-0 flex-1 text-center text-sm" />
          <svg width="7" height="4" viewBox="0 0 7 4"><path d="M0 0h7L3.500 4z" /></svg>
        </div>
        <div className="flex h-5 w-[77px] shrink-0 items-center justify-between rounded-l-full border border-[#9fb6d4] bg-linear-to-b from-[#e8f0fa] to-[#b9cfe9] px-1 font-['Liberation_Serif',serif] font-bold italic">
          <span className="size-2 rounded-full bg-[#c9d4e4]" />
          <span className="text-[#445]">fx</span>
        </div>
        <input
          aria-label="Formula bar"
          defaultValue="附图反光点开窗与盘等大，反光点开窗比反光点的直径大1mm。"
          className="h-full flex-1 pl-3 font-['Liberation_Mono','Noto_Sans_CJK_SC',monospace]"
        />
      </div>
      <Sheet />
      {/* annotations drawn over the sheet */}
      <div className="absolute top-[443px] left-[89px] h-[54px] w-[781px] border-4 border-[#ffff00] shadow-[3px_3px_5px_rgba(0,0,0,0.6),inset_3px_3px_5px_rgba(0,0,0,0.5)]" />
      <svg width="60" height="84" viewBox="0 0 60 84" className="absolute top-[370px] left-[448px]">
        <path d="M6 5L42 60" stroke="#ff0000" strokeWidth="5" strokeLinecap="round" />
        <path d="M54 79L33 62L39 60L46 53Z" fill="#ff0000" stroke="#ff0000" strokeWidth="2" />
      </svg>
      <svg width="20" height="5" viewBox="0 0 20 5" className="absolute bottom-0 left-[874px]">
        <path d="M0 5L18 0l2 5z" fill="#35c020" />
      </svg>
    </section>
  );
}

export default function App() {
  return (
    <div className="relative h-screen overflow-hidden bg-[#00a2ed] pl-2 font-['Liberation_Mono','Noto_Sans_CJK_SC',monospace] text-black">
      <main className="flex h-full flex-col bg-black">
        <div className="flex h-[23px] shrink-0 bg-white pl-2 text-[#999]">
          <div className="flex flex-1 items-center gap-1 pb-2">
            <AppIcon />
            <h1 className="font-['Open_Sans',sans-serif] text-[13px] leading-4">
              Graphic Editor 9.07b2 (00@HY-HYCAM-PC064 - Windows, pid:11520)
            </h1>
          </div>
          <div className="flex pb-2"><WindowButtons className="w-[127px]" /></div>
        </div>
        <Header />
        <div className="flex min-h-0 flex-1">
          <LeftPanel />
          <div className="relative min-w-0 flex-1 overflow-hidden">
            <BoardDrawing />
          </div>
          <ToolPalette />
        </div>
        <StatusBar />
        <div className="h-3.5 shrink-0 border-t-2 border-l-2 border-[#548f8b] bg-[#b8ffff]" />
      </main>
      <PopviewWindow />
      <MeasurePopup />
      <ExcelWindow />
    </div>
  );
}
